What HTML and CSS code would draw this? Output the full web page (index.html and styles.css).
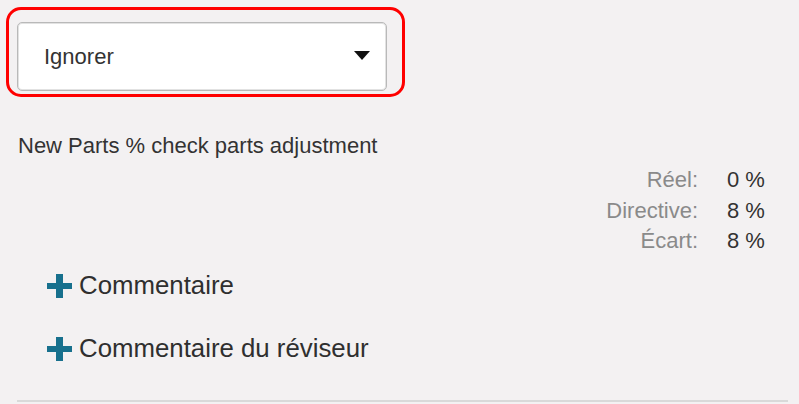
FILE: index.html
```html
<!DOCTYPE html>
<html lang="fr">
<head>
<meta charset="utf-8">
<title>Ajustement</title>
<link rel="stylesheet" href="styles.css">
</head>
<body>
<div class="panel">
  <div class="focus-ring">
    <div class="select">
      <span class="select-value">Ignorer</span>
      <span class="caret"></span>
    </div>
  </div>
  <div class="title">New Parts % check parts adjustment</div>
  <div class="stats">
    <span class="label">Réel:</span><span class="value">0 %</span>
    <span class="label">Directive:</span><span class="value">8 %</span>
    <span class="label">Écart:</span><span class="value">8 %</span>
  </div>
  <div class="comment-row">
    <span class="plus"></span><span class="comment-text">Commentaire</span>
  </div>
  <div class="comment-row second">
    <span class="plus"></span><span class="comment-text">Commentaire du réviseur</span>
  </div>
  <div class="divider"></div>
</div>
</body>
</html>
```

FILE: styles.css
```css
html, body {
  margin: 0;
  padding: 0;
}
body {
  background: #f3f1f2;
  font-family: "Liberation Sans", Arial, sans-serif;
  color: #333333;
  width: 799px;
  height: 404px;
  overflow: hidden;
}
.panel {
  padding: 7px 11px 0 17px;
}
.focus-ring {
  margin-left: -11px;
  width: fit-content;
  border: 3px solid #ff0000;
  border-radius: 15px;
  padding: 12px 15px 3px 8px;
}
.select {
  box-sizing: border-box;
  width: 370px;
  height: 69px;
  background: #ffffff;
  border: 1px solid #b9b9b9;
  box-shadow: inset 0 0 0 1px #e2e2e2;
  border-radius: 5px;
  display: flex;
  align-items: center;
  justify-content: space-between;
  padding: 0 16px 0 26px;
  font-size: 22px;
  color: #333333;
}
.caret {
  width: 0;
  height: 0;
  border-left: 8px solid transparent;
  border-right: 8px solid transparent;
  border-top: 9px solid #111111;
  margin-top: -2px;
}
.title {
  margin-top: 34px;
  font-size: 22px;
  line-height: 30px;
  padding-left: 1px;
}
.stats {
  display: grid;
  grid-template-columns: auto 61px;
  column-gap: 29px;
  justify-content: end;
  font-size: 22px;
  line-height: 30.5px;
  margin-top: 4px;
}
.label {
  text-align: right;
  color: #8a8a8a;
}
.value {
  color: #333333;
}
.comment-row {
  display: flex;
  align-items: center;
  height: 40px;
  margin-top: 9px;
  padding-left: 30px;
  gap: 7px;
  font-size: 25.8px;
  color: #2f2f2f;
}
.comment-row.second {
  margin-top: 23px;
}
.plus {
  position: relative;
  width: 25px;
  height: 24px;
  flex: none;
}
.plus::before,
.plus::after {
  content: "";
  position: absolute;
  background: #17708d;
}
.plus::before {
  left: 0;
  right: 0;
  top: 9px;
  height: 6px;
}
.plus::after {
  top: 0;
  bottom: 0;
  left: 9px;
  width: 7px;
}
.divider {
  margin-top: 31px;
  height: 2px;
  background: #d9d9d9;
}
```
